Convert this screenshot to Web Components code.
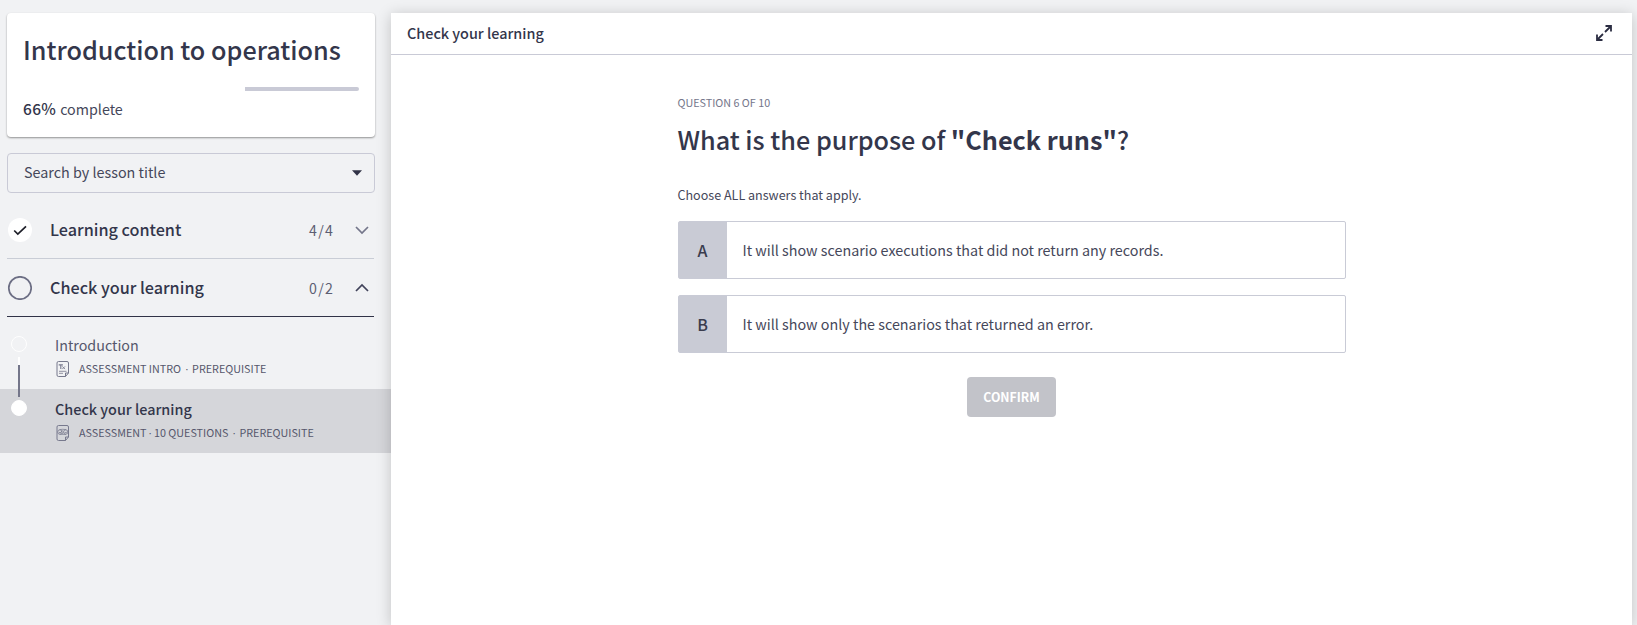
<!DOCTYPE html>
<html lang="en">
<head>
<meta charset="utf-8">
<title>Introduction to operations</title>
<style>
html, body { margin: 0; height: 100%; }
body { background: #f1f2f4; color: #33364b; font-family: "Noto Sans CJK SC", "Open Sans", sans-serif; font-size: 14px; overflow: hidden; }
</style>
</head>
<body>
<course-player></course-player>
<script>
const define = (name, html) => customElements.define(name, class extends HTMLElement {
  constructor() {
    super();
    const t = document.createElement('template');
    t.innerHTML = html;
    this.attachShadow({ mode: 'open' }).append(t.content.cloneNode(true));
  }
});

define('course-card', `<style>
:host { display: flex; flex-direction: column; box-sizing: border-box; height: 124px; padding: 18px 16px 0; background: #fff; border-radius: 4px; box-shadow: 0 1px 2px rgba(0,0,0,.4); }
h1 { margin: 0; font-size: 25.2px; line-height: 36px; font-weight: 500; white-space: nowrap; }
.bar { display: flex; justify-content: flex-end; height: 4px; margin-top: 20px; }
.bar i { width: 114px; background: #c9cad6; border-radius: 0 2px 2px 0; }
p { display: flex; align-items: baseline; gap: 4px; margin: 5px 0 0; font-size: 14.3px; line-height: 24px; color: #45475a; white-space: nowrap; }
b { font-weight: 500; font-size: 15.5px; letter-spacing: .3px; color: #33364b; }
</style><h1>Introduction to operations</h1><div class="bar"><i></i></div><p><b>66%</b> <span>complete</span></p>`);

define('lesson-search', `<style>
:host { display: flex; align-items: center; justify-content: space-between; box-sizing: border-box; height: 40px; padding: 0 12px 0 16px; border: 1px solid #c9cad6; border-radius: 4px; font-size: 14.35px; color: #45475a; }
span { line-height: 20px; margin-bottom: 2px; }
</style><span>Search by lesson title</span><svg width="10" height="6" viewBox="0 0 10 6"><path d="M0 .2h10L5 5.8z" fill="#313347"/></svg>`);

define('lesson-section', `<style>
:host { display: flex; align-items: center; box-sizing: border-box; height: 58px; border-bottom: 1px solid #c9cdd6; font-size: 16.2px; }
:host([open]) { border-color: #313347; }
.name { flex: 1; margin: 0 0 2px 18px; font-weight: 500; white-space: nowrap; }
.count { font-size: 14.2px; letter-spacing: 1.2px; color: #5c5e73; margin: 1px 20px 0 0; }
.state, .chev { display: flex; }
</style><slot class="state" name="state"></slot><span class="name"><slot></slot></span><span class="count"><slot name="count"></slot></span><slot class="chev" name="chevron"></slot>`);

define('lesson-item', `<style>
:host { display: grid; grid-template-columns: 55px 1fr; height: 64px; color: #55576c; }
:host([current]) { background: #d5d6da; }
.rail { display: flex; flex-direction: column; align-items: center; width: 16px; margin-left: 11px; padding-top: 11px; }
.dot { box-sizing: border-box; width: 16px; height: 16px; border: 1px solid #fff; border-radius: 50%; flex: none; }
:host([current]) .dot { background: #fff; }
.link { width: 2px; height: 40px; margin-top: 5px; flex: none; background: linear-gradient(#fff 8px, #74768a 8px); position: relative; z-index: 1; }
:host([current]) .link { display: none; }
.name { font-size: 14.3px; line-height: 20px; margin-top: 10px; white-space: nowrap; }
:host([current]) .name { font-weight: 500; font-size: 14.4px; color: #33364b; }
.meta { display: flex; align-items: center; gap: 9px; margin-top: 6px; height: 16px; font-size: 10.75px; line-height: 16px; white-space: nowrap; }
</style><div class="rail"><span class="dot"></span><span class="link"></span></div>
<div><div class="name"><slot></slot></div><div class="meta"><slot name="icon"></slot><slot name="meta"></slot></div></div>`);

define('course-sidebar', `<style>
:host { display: block; width: 391px; padding-top: 13px; box-sizing: border-box; }
.top { margin: 0 16px 0 7px; }
lesson-search { margin-top: 16px; }
.sections { margin: 8px 1px 0 0; }
.items { margin-top: 8px; }
i { font: 10.5px/1 "Open Sans", sans-serif; margin: 0 1.5px 0 2px; }
.tight i { margin: 0; }
</style>
<div class="top"><course-card></course-card><lesson-search></lesson-search>
<div class="sections">
<lesson-section><svg slot="state" width="25" height="24" viewBox="0 0 25 24"><circle cx="13" cy="12" r="12" fill="#fff"/><path d="M7.2 12.5l3.6 3.600L19 8.300" fill="none" stroke="#1d1e28" stroke-width="1.700"/></svg><span>Learning content</span><span slot="count">4/4</span><svg slot="chevron" width="20" height="12" viewBox="0 0 20 12"><path d="M2 3l6 6 6-6" fill="none" stroke="#74768a" stroke-width="1.700"/></svg></lesson-section>
<lesson-section open><svg slot="state" width="25" height="24" viewBox="0 0 25 24"><circle cx="13" cy="12" r="11.200" fill="none" stroke="#6c6e84" stroke-width="1.700"/></svg><span>Check your learning</span><span slot="count">0/2</span><svg slot="chevron" width="20" height="12" viewBox="0 0 20 12"><path d="M2 9l6-6 6 6" fill="none" stroke="#41435a" stroke-width="1.700"/></svg></lesson-section>
</div></div>
<div class="items">
<lesson-item><span>Introduction</span><svg slot="icon" width="15" height="16" viewBox="0 0 15 16" fill="none" stroke="#77798d"><path d="M3.500.5h8.500q1.500 0 1.500 1.500V12l-3 3.500H3.500Q2 15.500 2 14V2Q2 .5 3.500.5zM13.500 12h-3v3.500" stroke-width="1"/><path d="M3.700 3.900h4.200M5.800 4v4" stroke-width="1.100"/><path d="M7.300 5.400l2.700 2.700M10 5.400L7.300 8.100" stroke-width=".9"/><path d="M4 10.300h7.500M4 12.300h4" stroke-width=".8"/></svg><span slot="meta">ASSESSMENT INTRO <i>·</i> PREREQUISITE</span></lesson-item>
<lesson-item current><span>Check your learning</span><svg slot="icon" width="15" height="16" viewBox="0 0 15 16" fill="none" stroke="#77798d"><path d="M3.500.5h8.500q1.500 0 1.500 1.500V12l-3 3.500H3.500Q2 15.500 2 14V2Q2 .5 3.500.5zM13.500 12h-3v3.500" stroke-width="1"/><path d="M4.500 4.600q3-.6 6.500 0M4.500 9.400h6.500" stroke-width=".7"/><circle cx="4.900" cy="7" r="2.200" stroke-width=".8"/><circle cx="10.700" cy="7" r="2.200" stroke-width=".8"/><path d="M4 7l1 1 2.500-2.500M7 8.500l1-.5M9.700 7l1 1 1.500-1.500" stroke-width=".8"/></svg><span slot="meta"><span class="tight">ASSESSMENT <i>·</i> 10 QUESTIONS</span> <i>·</i> PREREQUISITE</span></lesson-item>
</div>`);

define('answer-option', `<style>
:host { display: flex; box-sizing: border-box; height: 58px; border: 1px solid #c9cbd6; border-radius: 2px; background: #fff; }
.key { display: flex; align-items: center; justify-content: center; width: 48px; background: #c9cbd5; font-size: 16px; font-weight: 500; color: #3a3c4e; }
.text { display: flex; align-items: center; padding: 0 0 2px 16px; font-size: 14.330px; color: #45475a; white-space: nowrap; }
</style><div class="key"><slot name="key"></slot></div><div class="text"><slot></slot></div>`);

define('confirm-button', `<style>
:host { display: block; }
button { display: block; width: 89px; height: 40px; padding: 0; border: 0; border-radius: 4px; background: #c2c3c9; color: #fff; font: 700 12.300px/40px "Noto Sans CJK SC", "Open Sans", sans-serif; }
</style><button type="button"><slot></slot></button>`);

define('lesson-pane', `<style>
:host { display: flex; flex-direction: column; background: #fff; box-shadow: 0 2px 14px rgba(0,0,0,.2); }
header { display: flex; align-items: center; justify-content: space-between; box-sizing: border-box; height: 42px; padding: 0 20px 2px 16px; border-bottom: 1px solid #c9cad6; font-size: 14.400px; font-weight: 500; }
main { width: 668px; margin: 0 auto; padding-top: 39px; }
.count { font-size: 10.750px; line-height: 18px; color: #74768a; }
h2 { margin: 7px 0 0; font-size: 25.200px; line-height: 40px; font-weight: 500; white-space: nowrap; }
h2 b { font-weight: 700; }
.hint { margin-top: 26px; font-size: 12.550px; line-height: 20px; color: #45475a; }
.answers { display: grid; gap: 16px; margin-top: 16px; }
.action { display: flex; justify-content: center; margin-top: 24px; }
</style>
<header><span>Check your learning</span><svg width="16" height="16" viewBox="0 0 16 16" fill="none" stroke="#2b2d42" stroke-width="1.800"><path d="M9 7l6-6M9.500 1h5.500V6.500M7 9l-6 6M1 9.500v5.500H6.500"/></svg></header>
<main><div class="count">QUESTION 6 OF 10</div>
<h2>What is the purpose of <b>"Check runs"</b>?</h2>
<div class="hint">Choose ALL answers that apply.</div>
<div class="answers">
<answer-option><span slot="key">A</span><span>It will show scenario executions that did not return any records.</span></answer-option>
<answer-option><span slot="key">B</span><span>It will show only the scenarios that returned an error.</span></answer-option>
</div>
<div class="action"><confirm-button>CONFIRM</confirm-button></div></main>`);

define('course-player', `<style>
:host { display: grid; grid-template-columns: 391px 1241px; height: 625px; }
lesson-pane { margin-top: 13px; }
</style><course-sidebar></course-sidebar><lesson-pane></lesson-pane>`);
</script>
</body>
</html>
